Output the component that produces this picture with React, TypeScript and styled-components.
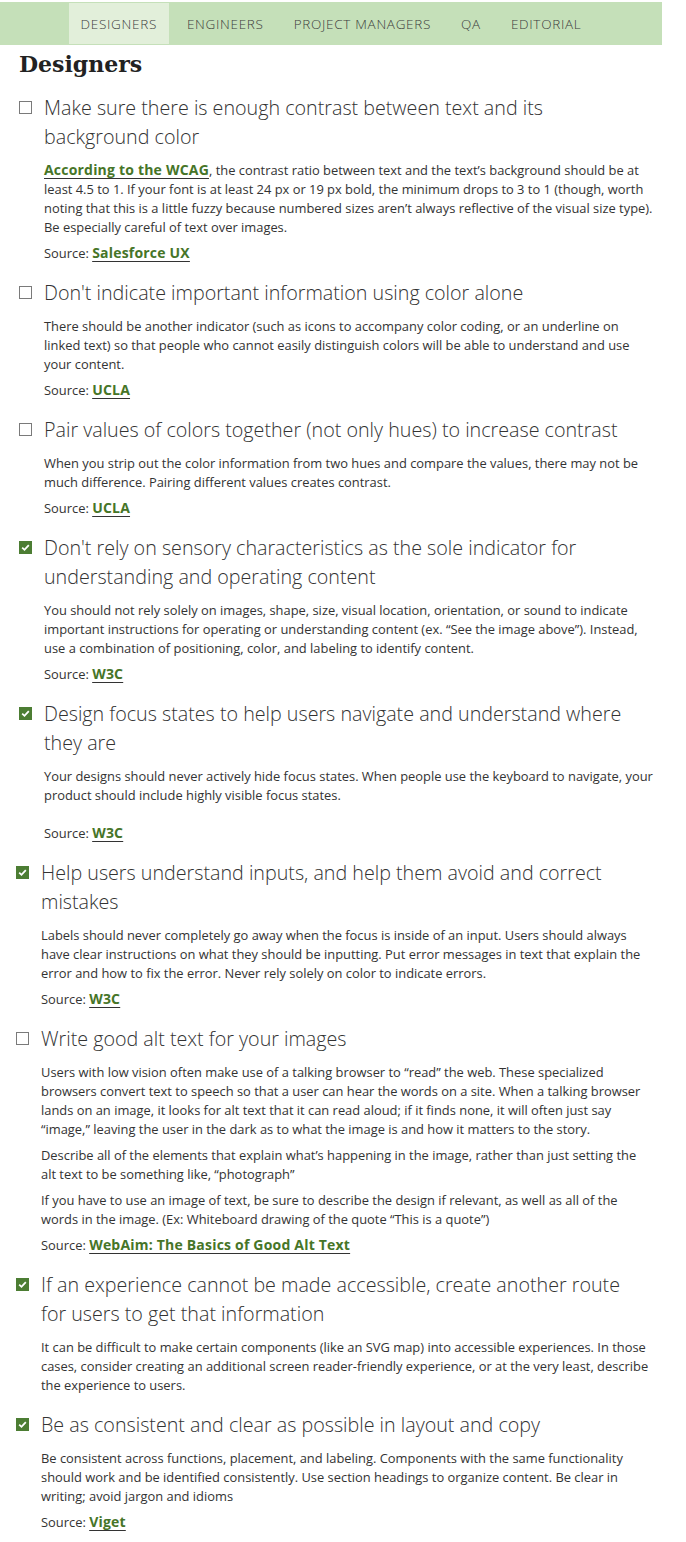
import React from "react";
import styled, { createGlobalStyle } from "styled-components";

const Global = createGlobalStyle`
  html, body { margin: 0; padding: 0; background: #ffffff; }
  body { font-family: "Open Sans", sans-serif; color: #333; }
  * { box-sizing: border-box; }
`;

const Page = styled.div`
  width: 662px;
  padding-top: 2px;
`;

const Nav = styled.nav`
  height: 43px;
  background: #c5e0b9;
  display: flex;
  justify-content: center;
  align-items: center;
  gap: 6px;
`;

const Tab = styled.a<{ $active?: boolean }>`
  height: 41px;
  padding: 0 12px;
  display: flex;
  align-items: center;
  font-family: "Open Sans", sans-serif;
  font-weight: 300;
  font-size: 13.5px;
  letter-spacing: 0.7px;
  text-transform: uppercase;
  color: #3c3c3c;
  text-decoration: none;
  background: ${(p) => (p.$active ? "#e2efda" : "transparent")};
`;

const Content = styled.main`
  padding: 0 8px 0 19px;
`;

const Title = styled.h1`
  margin: 4px 0 0;
  font-family: "DejaVu Serif", serif;
  font-weight: bold;
  font-size: 22px;
  line-height: 30px;
  color: #222;
`;

const List = styled.ul`
  list-style: none;
  margin: 14px 0 0;
  padding: 0;
  display: flex;
  flex-direction: column;
  gap: 8px;
`;

const Item = styled.li<{ $shift?: boolean }>`
  margin-left: ${(p) => (p.$shift ? "-3px" : "0")};
`;

const ItemHead = styled.div`
  display: flex;
  align-items: flex-start;
  gap: 12px;
  margin-bottom: 10px;
  padding-right: 9px;
`;

const Box = styled.span<{ $checked?: boolean }>`
  flex: none;
  width: 13px;
  height: 13px;
  margin-top: 8px;
  border: 1px solid ${(p) => (p.$checked ? "#4c7d33" : "#7a7a7a")};
  background: ${(p) => (p.$checked ? "#4c7d33" : "#fff")};
  display: flex;
  align-items: center;
  justify-content: center;
`;

const ItemTitle = styled.h3`
  margin: 0;
  font-family: "Open Sans", sans-serif;
  font-weight: 300;
  font-size: 19.7px;
  line-height: 29px;
  color: #333;
`;

const Body = styled.div`
  padding-left: 25px;
`;

const Para = styled.p<{ $extra?: number }>`
  margin: ${(p) => p.$extra ?? 0}px 0 7px;
  font-family: "Open Sans", sans-serif;
  font-size: 12.9px;
  line-height: 19px;
  color: #333;
`;

const Link = styled.a`
  font-weight: bold;
  font-size: 14px;
  line-height: 14px;
  letter-spacing: 0.2px;
  color: #467528;
  text-decoration: underline;
  text-decoration-color: #333;
  text-underline-offset: 3px;
`;

type Entry = {
  checked: boolean;
  shift?: boolean;
  title: string;
  paras: React.ReactNode[];
  source?: string;
  sourceGap?: number;
};

const entries: Entry[] = [
  {
    checked: false,
    title: "Make sure there is enough contrast between text and its background color",
    paras: [
      <>
        <Link href="#">According to the WCAG</Link>, the contrast ratio between text and the text’s
        background should be at least 4.5 to 1. If your font is at least 24 px or 19 px bold, the
        minimum drops to 3 to 1 (though, worth noting that this is a little fuzzy because numbered
        sizes aren’t always reflective of the visual size type). Be especially careful of text over
        images.
      </>,
    ],
    source: "Salesforce UX",
  },
  {
    checked: false,
    title: "Don't indicate important information using color alone",
    paras: [
      "There should be another indicator (such as icons to accompany color coding, or an underline on linked text) so that people who cannot easily distinguish colors will be able to understand and use your content.",
    ],
    source: "UCLA",
  },
  {
    checked: false,
    title: "Pair values of colors together (not only hues) to increase contrast",
    paras: [
      "When you strip out the color information from two hues and compare the values, there may not be much difference. Pairing different values creates contrast.",
    ],
    source: "UCLA",
  },
  {
    checked: true,
    title: "Don't rely on sensory characteristics as the sole indicator for understanding and operating content",
    paras: [
      "You should not rely solely on images, shape, size, visual location, orientation, or sound to indicate important instructions for operating or understanding content (ex. “See the image above”). Instead, use a combination of positioning, color, and labeling to identify content.",
    ],
    source: "W3C",
  },
  {
    checked: true,
    title: "Design focus states to help users navigate and understand where they are",
    paras: [
      "Your designs should never actively hide focus states. When people use the keyboard to navigate, your product should include highly visible focus states.",
    ],
    source: "W3C",
    sourceGap: 19,
  },
  {
    checked: true,
    shift: true,
    title: "Help users understand inputs, and help them avoid and correct mistakes",
    paras: [
      "Labels should never completely go away when the focus is inside of an input. Users should always have clear instructions on what they should be inputting. Put error messages in text that explain the error and how to fix the error. Never rely solely on color to indicate errors.",
    ],
    source: "W3C",
  },
  {
    checked: false,
    shift: true,
    title: "Write good alt text for your images",
    paras: [
      "Users with low vision often make use of a talking browser to “read” the web. These specialized browsers convert text to speech so that a user can hear the words on a site. When a talking browser lands on an image, it looks for alt text that it can read aloud; if it finds none, it will often just say “image,” leaving the user in the dark as to what the image is and how it matters to the story.",
      "Describe all of the elements that explain what’s happening in the image, rather than just setting the alt text to be something like, “photograph”",
      "If you have to use an image of text, be sure to describe the design if relevant, as well as all of the words in the image. (Ex: Whiteboard drawing of the quote “This is a quote”)",
    ],
    source: "WebAim: The Basics of Good Alt Text",
  },
  {
    checked: true,
    shift: true,
    title: "If an experience cannot be made accessible, create another route for users to get that information",
    paras: [
      "It can be difficult to make certain components (like an SVG map) into accessible experiences. In those cases, consider creating an additional screen reader-friendly experience, or at the very least, describe the experience to users.",
    ],
  },
  {
    checked: true,
    shift: true,
    title: "Be as consistent and clear as possible in layout and copy",
    paras: [
      "Be consistent across functions, placement, and labeling. Components with the same functionality should work and be identified consistently. Use section headings to organize content. Be clear in writing; avoid jargon and idioms",
    ],
    source: "Viget",
  },
];

const Check = () => (
  <svg width="9" height="9" viewBox="0 0 9 9" aria-hidden="true">
    <path d="M1.2 4.6 L3.5 6.8 L7.8 2.2" fill="none" stroke="#fff" strokeWidth="1.8" />
  </svg>
);

const tabs = ["Designers", "Engineers", "Project Managers", "QA", "Editorial"];

export default function App() {
  return (
    <Page>
      <Global />
      <Nav>
        {tabs.map((t, i) => (
          <Tab key={t} href="#" $active={i === 0}>
            {t}
          </Tab>
        ))}
      </Nav>
      <Content>
        <Title>Designers</Title>
        <List>
          {entries.map((e, i) => (
            <Item key={i} $shift={e.shift}>
              <ItemHead>
                <Box $checked={e.checked}>{e.checked && <Check />}</Box>
                <ItemTitle>{e.title}</ItemTitle>
              </ItemHead>
              <Body>
                {e.paras.map((p, j) => (
                  <Para key={j}>{p}</Para>
                ))}
                {e.source && (
                  <Para $extra={e.sourceGap}>
                    Source: <Link href="#">{e.source}</Link>
                  </Para>
                )}
              </Body>
            </Item>
          ))}
        </List>
      </Content>
    </Page>
  );
}
